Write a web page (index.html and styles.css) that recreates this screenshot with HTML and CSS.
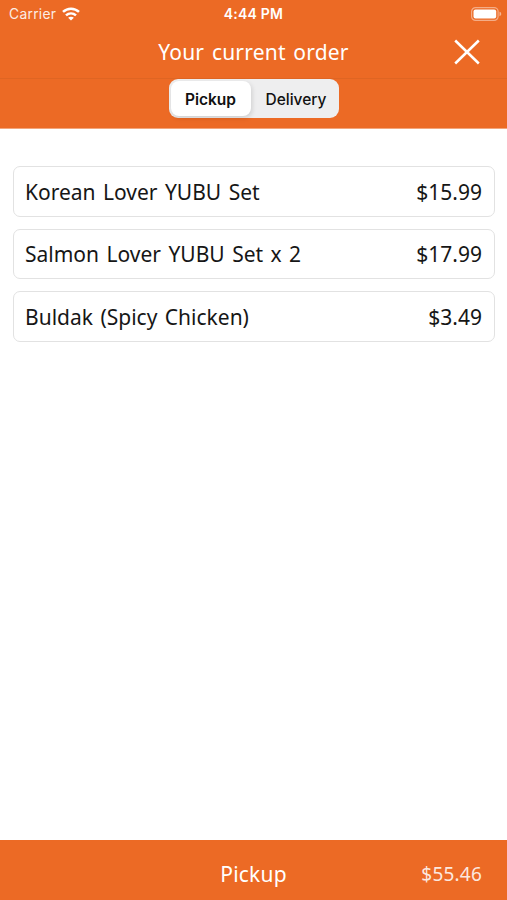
FILE: index.html
```html
<!DOCTYPE html>
<html lang="en">
<head>
    <meta charset="UTF-8">
    <meta name="viewport" content="width=device-width, initial-scale=1.0">
    <title>Your current order</title>
    <link rel="stylesheet" href="styles.css">
</head>
<body>
    <header class="header">
        <div class="status-bar">
            <div class="carrier">
                <span class="carrier-name">Carrier</span>
                <svg class="wifi" width="18" height="14" viewBox="0 0 18 14" fill="none" stroke="#fff" stroke-width="2.5">
                    <path d="M1 4.900C5.500 .6 12.500 .6 17 4.900"/>
                    <path d="M4 8.400C6.900 5.700 11.100 5.700 14 8.400"/>
                    <path d="M9 13.600L6.100 10.700C7.700 9.300 10.300 9.300 11.900 10.700Z" fill="#fff" stroke="none"/>
                </svg>
            </div>
            <span class="time">4:44 PM</span>
            <svg class="battery" width="31" height="14" viewBox="0 0 31 14">
                <rect x=".6" y=".6" width="26.500" height="12.800" rx="4" fill="none" stroke="#fff" stroke-opacity=".45" stroke-width="1.200"/>
                <rect x="2.500" y="2.500" width="22.700" height="9" rx="2" fill="#fff"/>
                <path d="M28.500 4.800C30.800 5.400 30.800 8.600 28.500 9.200Z" fill="#fff" fill-opacity=".5"/>
            </svg>
        </div>
        <div class="title-bar">
            <h1 class="title">Your current order</h1>
            <button class="close" aria-label="Close">
                <svg width="26" height="26" viewBox="0 0 26 26" fill="none" stroke="#fff" stroke-width="2.500">
                    <path d="M1.200 1.500L24.800 24.500M24.800 1.500L1.200 24.500"/>
                </svg>
            </button>
        </div>
        <div class="switch-bar">
            <div class="switch">
                <button class="option active">Pickup</button>
                <button class="option">Delivery</button>
            </div>
        </div>
    </header>

    <main class="items">
        <div class="item"><span class="item-name">Korean Lover YUBU Set</span><span class="price">$15.99</span></div>
        <div class="item"><span class="item-name">Salmon Lover YUBU Set x 2</span><span class="price">$17.99</span></div>
        <div class="item"><span class="item-name">Buldak (Spicy Chicken)</span><span class="price">$3.49</span></div>
    </main>

    <footer class="footer">
        <span class="footer-label">Pickup</span>
        <span class="total">$55.46</span>
    </footer>
</body>
</html>
```
FILE: styles.css
```css
* { box-sizing: border-box; }
body { margin: 0; height: 900px; display: flex; flex-direction: column; background: #fff; color: #161616; font-family: "Noto Sans", sans-serif; overflow: hidden; }
button { padding: 0; border: 0; background: none; font: inherit; color: inherit; cursor: pointer; }
svg { display: block; }

.header { height: 129px; background: #ec6a25; color: #fff; border-bottom: 1px solid #f3a57b; }
.status-bar { height: 26px; padding: 0 5px 0 9px; display: grid; grid-template-columns: 1fr auto 1fr; align-items: center; font-family: Inter, sans-serif; }
.carrier { padding-top: 2px; display: flex; align-items: center; gap: 6px; }
.carrier-name { font-size: 13.8px; letter-spacing: 0.3px; opacity: 0.88; }
.time { margin-right: 4px; font-size: 14px; font-weight: 600; letter-spacing: 0.2px; }
.battery { justify-self: end; margin-top: 1px; }

.title-bar { height: 53px; padding-bottom: 1px; display: grid; grid-template-columns: 80px 1fr 80px; align-items: center; border-bottom: 1px solid #df6523; }
.title { grid-column: 2; margin: 0; text-align: center; font-size: 21px; font-weight: 400; line-height: 28px; letter-spacing: 0.2px; word-spacing: 2px; white-space: nowrap; }
.close { justify-self: center; }

.switch-bar { display: flex; justify-content: center; }
.switch { width: 170px; height: 39px; padding: 2px; display: flex; background: #eeeeef; border-radius: 9px; color: #111; font-family: Inter, sans-serif; font-size: 15.5px; font-weight: 500; }
.option { flex: 1; padding: 1px 0 0 5px; }
.active { flex: 0 0 80px; padding-left: 0; background: #fff; border-radius: 8px; box-shadow: 1px 2px 5px rgba(0, 0, 0, 0.14); font-weight: 600; }

.items { flex: 1; padding: 37px 12px 0 13px; display: flex; flex-direction: column; gap: 12px; }
.item { height: 50.5px; padding: 1px 12px 0 11px; display: flex; align-items: center; justify-content: space-between; border: 1px solid #e2e2e2; border-radius: 7px; font-size: 21px; }
.item-name { word-spacing: 2px; white-space: nowrap; }

.footer { height: 60px; padding: 8px 25px 0; display: grid; grid-template-columns: 1fr auto 1fr; align-items: center; background: #ec6a25; color: #fff; }
.footer-label { grid-column: 2; font-size: 21px; letter-spacing: 0.2px; }
.total { justify-self: end; font-size: 19px; letter-spacing: 0.2px; opacity: 0.85; }
```
